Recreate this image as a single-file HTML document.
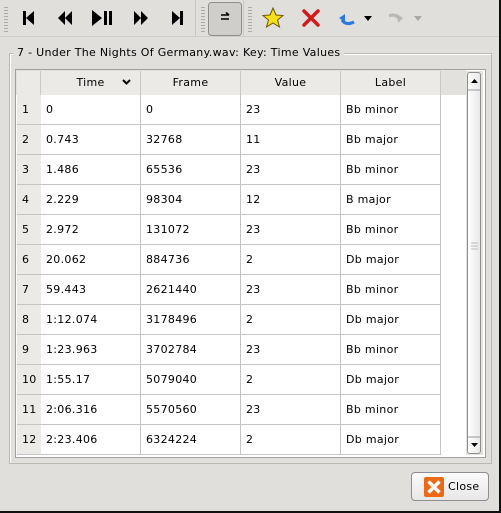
<!DOCTYPE html><html><head><style>
body{margin:0;width:501px;height:513px;background:#e0dfdc;font-family:"DejaVu Sans","Liberation Sans",sans-serif;font-size:11px;color:#000;position:relative;overflow:hidden;letter-spacing:0.3px}
.a{position:absolute}
.c{position:absolute;height:29px;line-height:29px;border-bottom:1px solid #c4c4c4;border-right:1px solid #c4c4c4;background:#fff;padding-left:5px;box-sizing:content-box}
.n{position:absolute;left:17px;width:19px;padding-left:5px;height:29px;line-height:29px;border-bottom:1px solid #c4c4c4;background:#ebeae7;text-align:left}
.h{position:absolute;top:71px;height:24px;line-height:24px;text-align:center;border-right:1px solid #c8c8c8;background:#ebeae7;border-bottom:1px solid #b8b8b8}
.grip{position:absolute;width:4px;background:repeating-linear-gradient(#aaa 0 1px,transparent 1px 3px)}
</style></head><body>
<div class="grip" style="left:4px;top:7px;height:26px"></div>
<div class="grip" style="left:201px;top:7px;height:26px"></div>
<div class="grip" style="left:248px;top:7px;height:26px"></div>
<div class="a" style="left:195px;top:0;width:1px;height:36px;background:#c8c8c8"></div>
<div class="a" style="left:243px;top:0;width:1px;height:36px;background:#c8c8c8"></div>
<div class="a" style="left:0;top:36px;width:501px;height:1px;background:#cfcecb"></div>
<svg class="a" style="left:0;top:0" width="440" height="36">
<g fill="#000">
<rect x="23" y="11" width="3" height="14"/><path d="M34 11 L26 18 L34 25Z"/>
<path d="M65 11 L58 18 L65 25Z M72 11 L65 18 L72 25Z"/>
<path d="M92 10 L102 18 L92 26Z"/><rect x="104" y="11" width="3" height="14"/><rect x="109" y="11" width="3" height="14"/>
<path d="M134 11 L141 18 L134 25Z M141 11 L148 18 L141 25Z"/>
<path d="M172 11 L180 18 L172 25Z"/><rect x="180" y="11" width="3" height="14"/>
</g>
<rect x="208.5" y="2.5" width="33" height="33" rx="3" fill="#cfcecb" stroke="#8f8e8c"/>
<path d="M221 15 H229 M226 12.5 L229 15 M221 19 H229" stroke="#000" stroke-width="1.6" fill="none"/>
<path d="M273 8 L276 15 L283 15.5 L277.5 20 L279.5 27 L273 23 L266.5 27 L268.5 20 L263 15.5 L270 15Z" fill="#f7e01a" stroke="#6a5a00" stroke-width="1"/>
<path d="M304 11 L318 25 M318 11 L304 25" stroke="#d21a1a" stroke-width="3.5" stroke-linecap="round"/>
<path d="M342 20 Q346 26 354 22" stroke="#2a78e0" stroke-width="3" fill="none"/><path d="M339 18 L345 14 L345 22Z" fill="#2a78e0"/>
<path d="M364 16 H372 L368 21Z" fill="#000"/>
<path d="M400 20 Q396 13 389 16" stroke="#b8b8b8" stroke-width="3" fill="none"/><path d="M403 18 L397 14 L398 23Z" fill="#b8b8b8"/>
<path d="M414 16 H422 L418 21Z" fill="#a8a8a8"/>
</svg>
<div class="a" style="left:9px;top:53px;width:481px;height:409px;border:1px solid #b9b8b5;box-shadow:inset 1px 1px 0 #fff"></div>
<div class="a" style="left:13px;top:46px;padding:0 4px;background:#e0dfdc;line-height:14px">7 - Under The Nights Of Germany.wav: Key: Time Values</div>
<div class="a" style="left:15px;top:69px;width:469px;height:387px;border:1px solid #a0a09e;background:#fff"></div>
<div class="a" style="left:16px;top:70px;width:450px;height:25px;background:#e2e1de"></div>
<div class="h" style="left:17px;width:23px"></div>
<div class="h" style="left:41px;width:99px">Time</div>
<svg class="a" style="left:122px;top:79px" width="9" height="6"><path d="M1 1 L4.5 4.5 L8 1" stroke="#000" stroke-width="2" fill="none"/></svg>
<div class="h" style="left:141px;width:99px">Frame</div>
<div class="h" style="left:241px;width:99px">Value</div>
<div class="h" style="left:341px;width:99px">Label</div>
<div id="rows"></div>
<div class="a" style="left:466px;top:71px;width:17px;height:384px;background:#e4e3e0"></div>
<div class="a" style="left:467px;top:72px;width:14px;height:382px;border:1px solid #8f8e8c;border-radius:3px;background:linear-gradient(90deg,#fff,#e8e8e8);box-sizing:border-box"></div>
<svg class="a" style="left:467px;top:72px" width="15" height="383"><path d="M4 11 L7.5 7 L11 11Z M4 371 L7.5 375 L11 371Z" fill="#000"/><path d="M1 18 H14 M1 365 H14" stroke="#9a9a9a"/><path d="M4 171 H11 M4 174 H11 M4 177 H11" stroke="#bbb"/></svg>
<div class="a" style="left:411px;top:472px;width:78px;height:29px;border:1px solid #8f8e8c;border-radius:4px;background:linear-gradient(#fafafa,#e8e8e8);box-sizing:border-box"></div>
<svg class="a" style="left:424px;top:477px" width="20" height="20"><rect width="20" height="20" rx="2" fill="#ec6a17"/><path d="M4.5 4.5 L15.5 15.5 M15.5 4.5 L4.5 15.5" stroke="#fff" stroke-width="3.4"/></svg>
<div class="a" style="left:448px;top:480px;line-height:14px">Close</div>
<div class="a" style="left:0;top:511px;width:501px;height:2px;background:#111"></div>
<div class="a" style="left:499px;top:0;width:2px;height:513px;background:#111"></div>
<script>
var d=[["0","0","23","Bb minor"],["0.743","32768","11","Bb major"],["1.486","65536","23","Bb minor"],["2.229","98304","12","B major"],["2.972","131072","23","Bb minor"],["20.062","884736","2","Db major"],["59.443","2621440","23","Bb minor"],["1:12.074","3178496","2","Db major"],["1:23.963","3702784","23","Bb minor"],["1:55.17","5079040","2","Db major"],["2:06.316","5570560","23","Bb minor"],["2:23.406","6324224","2","Db major"]];
var h="";for(var i=0;i<12;i++){var t=95+30*i;h+='<div class="n" style="top:'+t+'px">'+(i+1)+'</div>';var x=[41,141,241,341];for(var j=0;j<4;j++)h+='<div class="c" style="top:'+t+'px;left:'+x[j]+'px;width:94px">'+d[i][j]+'</div>';}
document.getElementById("rows").outerHTML=h;
</script>
</body></html>
